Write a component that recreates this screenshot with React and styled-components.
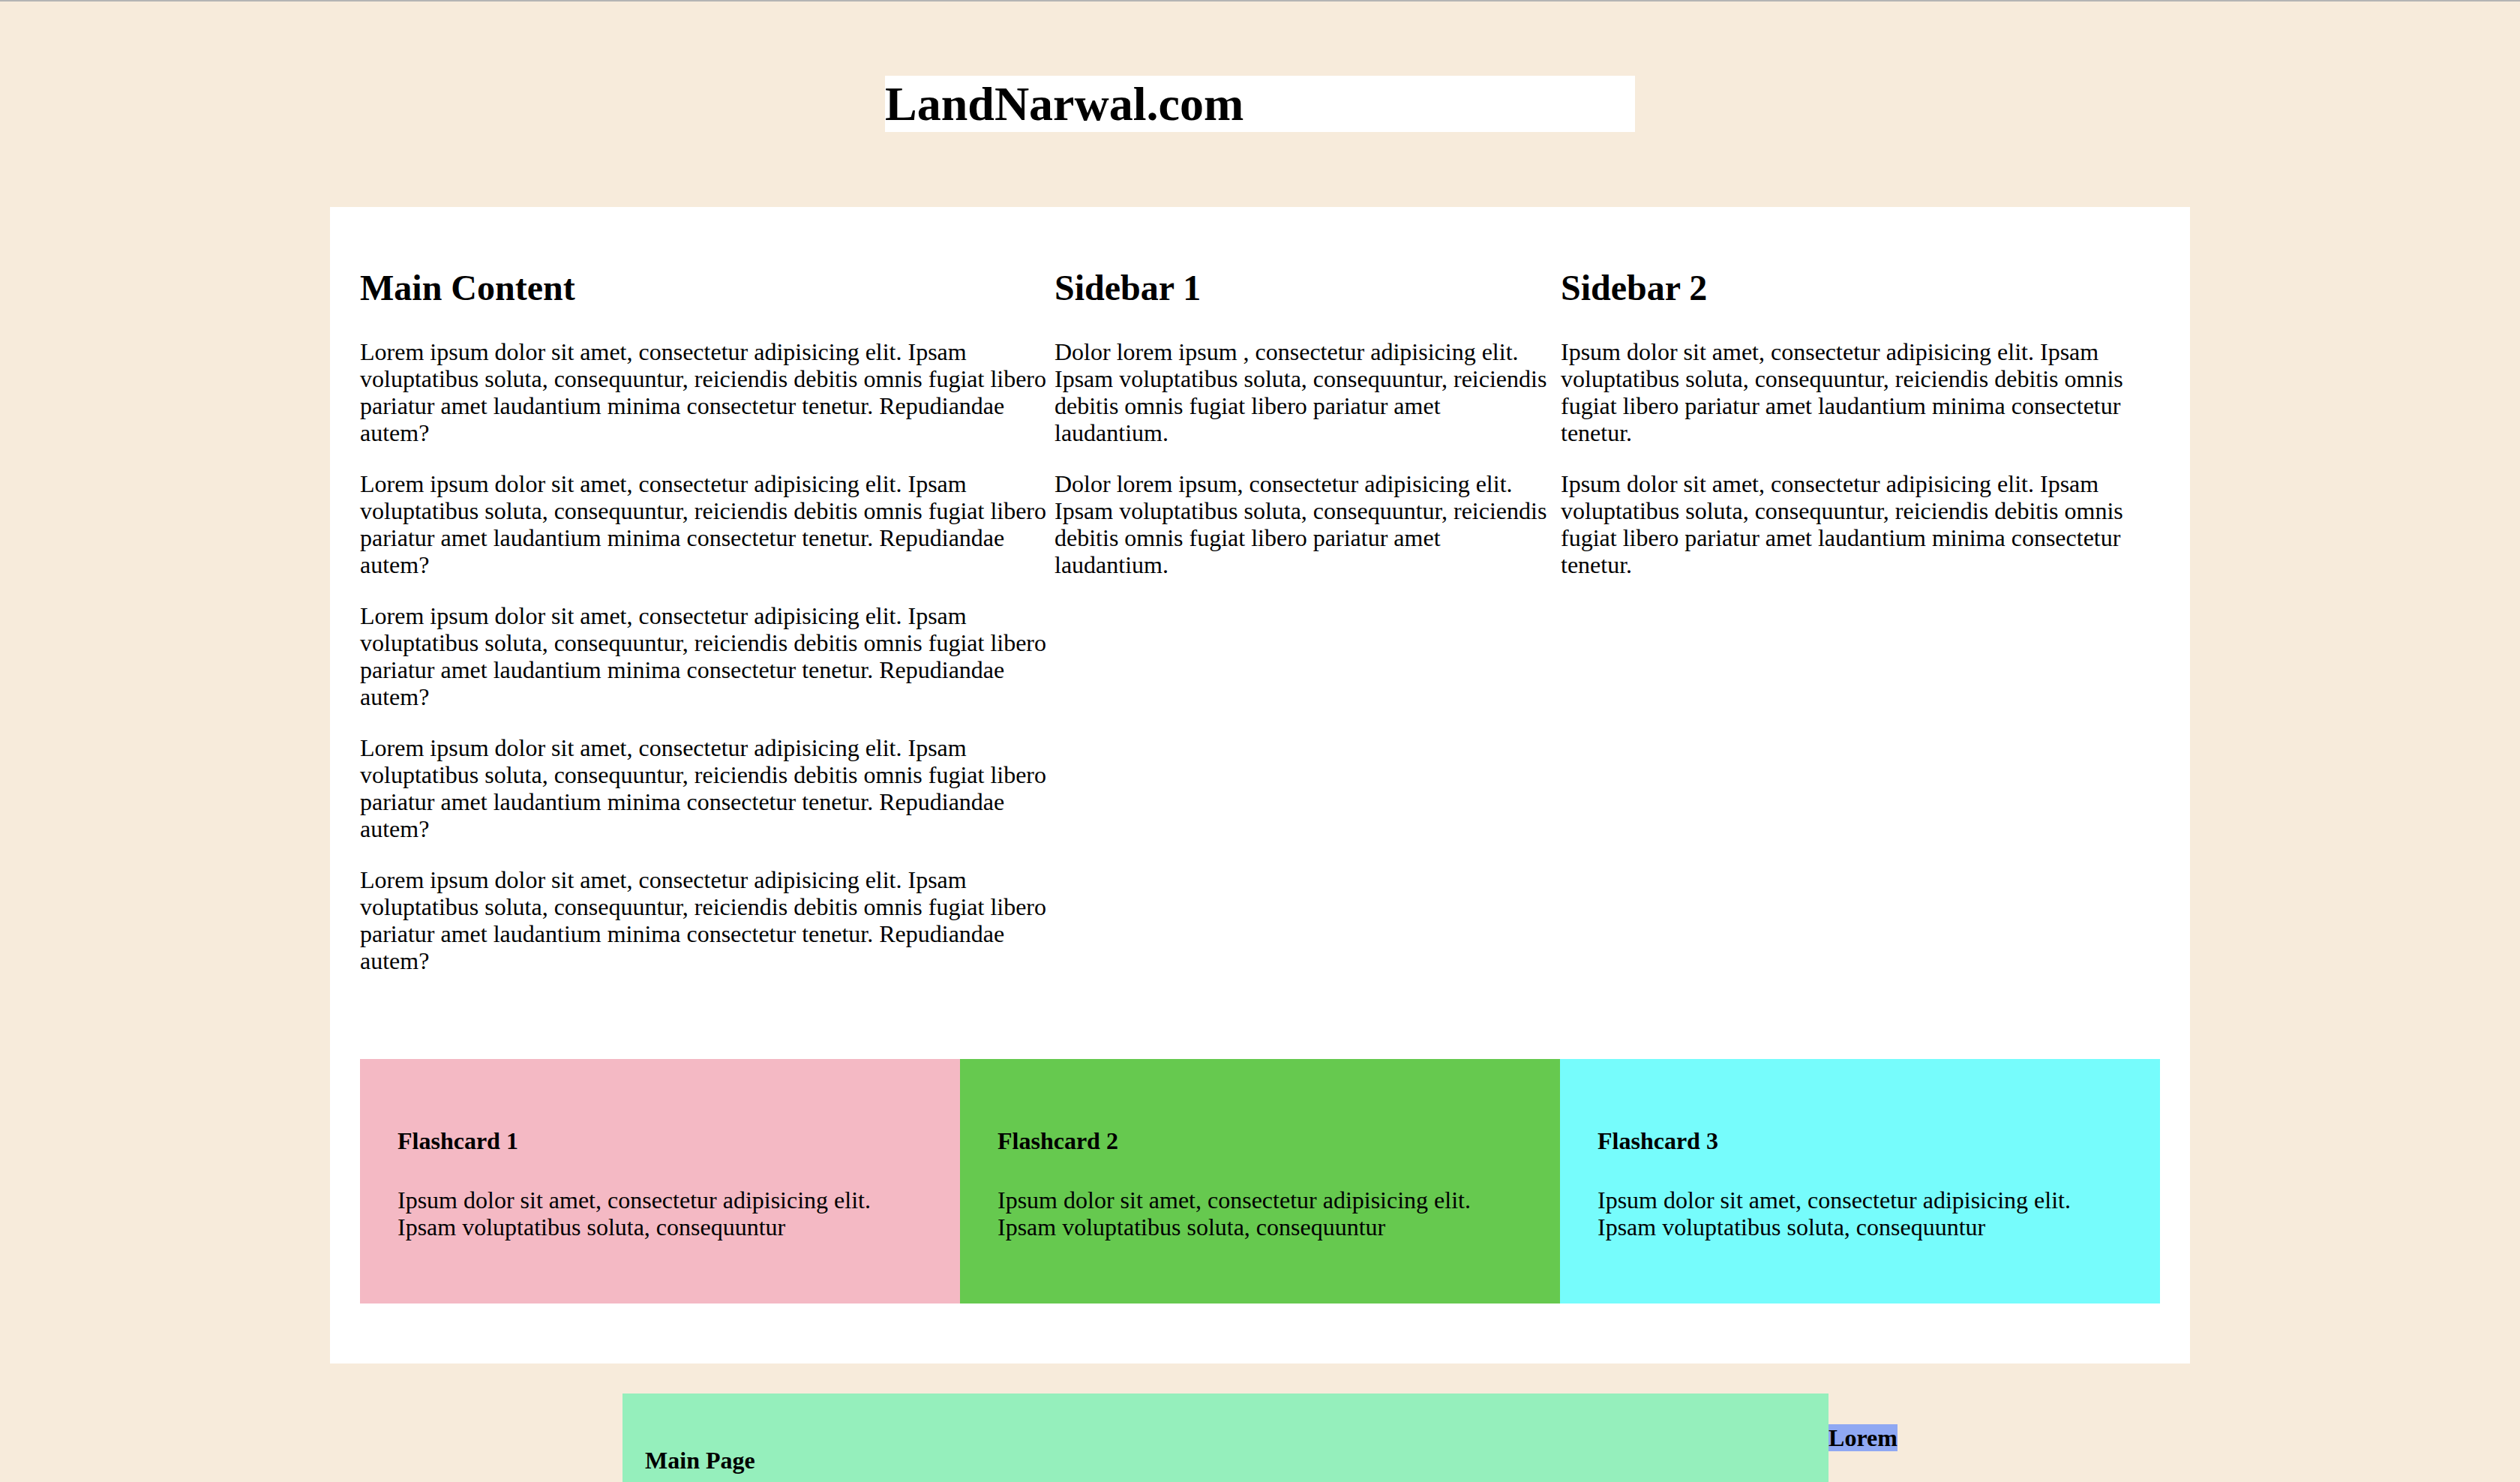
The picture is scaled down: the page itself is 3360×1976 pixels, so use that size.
import React from "react";
import styled, { createGlobalStyle } from "styled-components";

const SERIF = `"Liberation Serif", "Times New Roman", serif`;

const GlobalStyle = createGlobalStyle`
  html, body {
    margin: 0;
    padding: 0;
    background: #f7ebdb;
  }

  body {
    font-family: ${SERIF};
    font-size: 32px;
    color: #000;
  }
`;

const Page = styled.div`
  border-top: 2px solid #b4b4b4;
  min-height: 1974px;
`;

const SiteTitle = styled.h1`
  width: 1000px;
  margin: 99px auto 100px;
  background: white;
  font-size: 64px;
  font-weight: bold;
  line-height: 75px;
`;

const Container = styled.div`
  width: 2480px;
  box-sizing: border-box;
  margin: 0 auto;
  padding: 40px;
  background: white;
`;

const Columns = styled.div`
  display: grid;
  grid-template-columns: 926px 675px 799px;
`;

const Column = styled.section`
  padding-right: ${(p) => p.$gutter || 0}px;

  h2 {
    font-size: 48px;
    margin: 40px 0;
  }

  p {
    margin: 32px 0;
    line-height: 36px;
  }
`;

const Cards = styled.div`
  display: grid;
  grid-template-columns: repeat(3, 1fr);
  margin: 81px 0 40px;
`;

const Card = styled.div`
  background: ${(p) => p.$color};
  padding: 48px 50px 52px;

  h4 {
    font-size: 32px;
    margin: 42.6px 0;
  }

  p {
    margin: 32px 0;
    line-height: 36px;
  }
`;

const Footer = styled.div`
  display: flex;
  justify-content: center;
  align-items: flex-start;
  margin-top: 40px;
`;

const MainPage = styled.main`
  width: 1608px;
  min-height: 220px;
  box-sizing: border-box;
  padding: 28px 30px;
  background: #95efbc;

  h4 {
    font-size: 32px;
    margin: 42.6px 0;
  }
`;

const Aside = styled.aside`
  h4 {
    font-size: 32px;
    margin: 40.6px 0;
    background: #8fa8f3;
    line-height: 36px;
  }
`;

const lorem =
  "Lorem ipsum dolor sit amet, consectetur adipisicing elit. Ipsam voluptatibus soluta, consequuntur, reiciendis debitis omnis fugiat libero pariatur amet laudantium minima consectetur tenetur. Repudiandae autem?";

const side2 =
  "Ipsum dolor sit amet, consectetur adipisicing elit. Ipsam voluptatibus soluta, consequuntur, reiciendis debitis omnis fugiat libero pariatur amet laudantium minima consectetur tenetur.";

const cards = [
  { title: "Flashcard 1", color: "#f4b9c4" },
  { title: "Flashcard 2", color: "#66c94f" },
  { title: "Flashcard 3", color: "#76fcfc" },
];

const cardText =
  "Ipsum dolor sit amet, consectetur adipisicing elit. Ipsam voluptatibus soluta, consequuntur";

const App = () => (
  <Page>
    <GlobalStyle />
    <SiteTitle>LandNarwal.com</SiteTitle>
    <Container>
      <Columns>
        <Column>
          <h2>Main Content</h2>
          {[0, 1, 2, 3, 4].map((i) => (
            <p key={i}>{lorem}</p>
          ))}
        </Column>
        <Column $gutter={10}>
          <h2>Sidebar 1</h2>
          <p>
            Dolor lorem ipsum , consectetur adipisicing elit. Ipsam voluptatibus
            soluta, consequuntur, reiciendis debitis omnis fugiat libero pariatur
            amet laudantium.
          </p>
          <p>
            Dolor lorem ipsum, consectetur adipisicing elit. Ipsam voluptatibus
            soluta, consequuntur, reiciendis debitis omnis fugiat libero pariatur
            amet laudantium.
          </p>
        </Column>
        <Column>
          <h2>Sidebar 2</h2>
          <p>{side2}</p>
          <p>{side2}</p>
        </Column>
      </Columns>
      <Cards>
        {cards.map((card) => (
          <Card key={card.title} $color={card.color}>
            <h4>{card.title}</h4>
            <p>{cardText}</p>
          </Card>
        ))}
      </Cards>
    </Container>
    <Footer>
      <MainPage>
        <h4>Main Page</h4>
      </MainPage>
      <Aside>
        <h4>Lorem</h4>
      </Aside>
    </Footer>
  </Page>
);

export default App;
